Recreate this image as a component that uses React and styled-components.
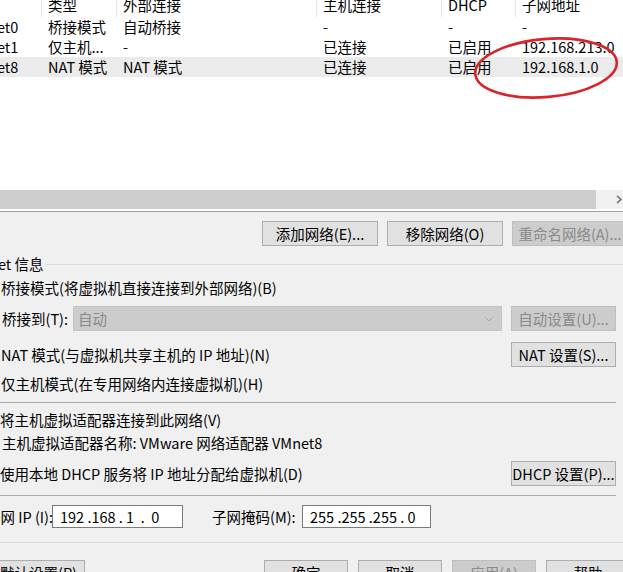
import React from "react";
import styled, { createGlobalStyle } from "styled-components";

const GlobalStyle = createGlobalStyle`
  *, *::before, *::after { box-sizing: border-box; }
  html, body { margin: 0; padding: 0; background: #f0f0f0; }
  body {
    font-family: "Noto Sans CJK SC", "Noto Sans", sans-serif;
    font-size: 14.5px;
    color: #000;
  }
`;

const Viewport = styled.div`
  position: relative;
  width: 623px;
  height: 572px;
  overflow: hidden;
  background: #f0f0f0;
`;

// the dialog is wider than the crop, its left edge sits off screen
const Dialog = styled.div`
  width: 670px;
  margin: -9px 0 0 -40px;
  display: flex;
  flex-direction: column;
`;

const NetList = styled.div`
  margin: 0 2px 0 1px;
  height: 221px;
  border: 1px solid #a0a0a0;
  background: #fff;
  padding-bottom: 2px;
  display: flex;
  flex-direction: column;
`;

const GRID = "80px 75px 200px 125px 74px 1fr";

const HeaderRow = styled.div`
  display: grid;
  grid-template-columns: ${GRID};
  height: 25px;
`;

const HeaderCell = styled.div`
  display: flex;
  align-items: center;
  padding-left: 6px;
  border-right: 1px solid #e5e5e5;
  white-space: nowrap;
  overflow: hidden;
  line-height: 20px;
`;

const ListRow = styled.div`
  display: grid;
  grid-template-columns: ${GRID};
  height: 20px;
  background: ${({ $selected }) => ($selected ? "#ebebeb" : "transparent")};
`;

const Cell = styled.div`
  display: flex;
  align-items: center;
  padding-left: 6px;
  white-space: nowrap;
  overflow: hidden;
  line-height: 20px;
`;

const ListFiller = styled.div`
  flex: 1;
`;

const HScroll = styled.div`
  height: 19px;
  display: flex;
  background: #f0f0f0;
`;

const ScrollArrow = styled.div`
  width: 17px;
  display: flex;
  align-items: center;
  justify-content: center;
`;

const ScrollTrack = styled.div`
  flex: 1;
  display: flex;
  padding-right: 14px;
`;

const ScrollThumb = styled.div`
  flex: 1;
  background: #cdcdcd;
`;

const ButtonBar = styled.div`
  display: flex;
  justify-content: flex-end;
  gap: 9px;
  margin-top: 9px;
  padding-right: 2px;
`;

const Button = styled.button`
  width: ${({ $w }) => $w}px;
  height: 25px;
  flex: none;
  padding: 0;
  font-family: inherit;
  font-size: 14.5px;
  line-height: 20px;
  white-space: nowrap;
  overflow: hidden;
  color: #000;
  background: #e1e1e1;
  border: 1px solid #adadad;
  border-radius: 0;

  &:disabled {
    color: #8a8a8a;
    background: #cccccc;
    border-color: #bfbfbf;
  }
`;

const GroupBox = styled.fieldset`
  margin: 9px 4px 0 2px;
  padding: 5px 9px 14px 9px;
  border: 1px solid #dcdcdc;
  min-width: 0;
  display: flex;
  flex-direction: column;
`;

const Legend = styled.legend`
  margin-left: -5px;
  padding: 0 2px;
  line-height: 18px;
  font-size: 14.5px;
`;

const Row = styled.div`
  display: flex;
  align-items: center;
  height: ${({ $h }) => $h || 20}px;
  margin-top: ${({ $top }) => $top || 0}px;
  line-height: 20px;
  white-space: nowrap;
`;

const Radio = styled.span`
  width: 13px;
  height: 13px;
  margin: 0 6px 0 10px;
  flex: none;
  border: 1px solid #333;
  border-radius: 50%;
  background: #fff;
  display: flex;
  align-items: center;
  justify-content: center;

  &::after {
    content: "";
    width: 7px;
    height: 7px;
    border-radius: 50%;
    background: ${({ $on }) => ($on ? "#333" : "transparent")};
  }
`;

const Check = styled.span`
  width: 13px;
  height: 13px;
  margin: 0 5px 0 10px;
  flex: none;
  border: 1px solid #333;
  background: #fff;
  font-size: 10px;
  line-height: 11px;
  text-align: center;
`;

const SubLabel = styled.span`
  padding-left: 30px;
  width: ${({ $w }) => ($w ? `${$w}px` : "auto")};
  flex: none;
`;

const Combo = styled.div`
  flex: 1;
  height: 25px;
  margin-right: 9px;
  padding: 0 7px 0 4px;
  display: flex;
  align-items: center;
  justify-content: space-between;
  background: #cccccc;
  border: 1px solid #c4c4c4;
  color: #8a8a8a;
`;

const RightButton = styled(Button)`
  margin-left: auto;
`;

const Separator = styled.div`
  height: 1px;
  margin-top: ${({ $top }) => $top}px;
  background: #a9a9a9;
`;

const FieldLabel = styled.span`
  width: ${({ $w }) => $w}px;
  margin-left: ${({ $left }) => $left || 0}px;
  padding-left: ${({ $pad }) => $pad || 0}px;
  flex: none;
  white-space: nowrap;
`;

const IpBox = styled.div`
  width: ${({ $w }) => $w}px;
  height: 23px;
  padding-left: 7px;
  display: flex;
  align-items: center;
  background: #fff;
  border: 1px solid #7a7a7a;
  white-space: pre;
`;

const Footer = styled.div`
  display: flex;
  gap: 10px;
  margin-top: 17px;
  padding-left: 3px;
`;

const FooterSpacer = styled.div`
  flex: 1;
`;

const Annotation = styled.svg`
  position: absolute;
  left: 0;
  top: 0;
  width: 623px;
  height: 572px;
  pointer-events: none;
`;

const columns = ["名称", "类型", "外部连接", "主机连接", "DHCP", "子网地址"];

const networks = [
  ["VMnet0", "桥接模式", "自动桥接", "-", "-", "-"],
  ["VMnet1", "仅主机...", "-", "已连接", "已启用", "192.168.213.0"],
  ["VMnet8", "NAT 模式", "NAT 模式", "已连接", "已启用", "192.168.1.0"],
];

const SELECTED = 2;

export default function App() {
  return (
    <Viewport>
      <GlobalStyle />
      <Dialog>
        <NetList>
          <HeaderRow>
            {columns.map((c) => (
              <HeaderCell key={c}>{c}</HeaderCell>
            ))}
          </HeaderRow>
          {networks.map((net, i) => (
            <ListRow key={net[0]} $selected={i === SELECTED}>
              {net.map((v, j) => (
                <Cell key={j}>{v}</Cell>
              ))}
            </ListRow>
          ))}
          <ListFiller />
          <HScroll>
            <ScrollArrow>
              <svg width="6" height="9" viewBox="0 0 6 9">
                <polyline points="5,1 1,4.5 5,8" fill="none" stroke="#606060" strokeWidth="1.3" />
              </svg>
            </ScrollArrow>
            <ScrollTrack>
              <ScrollThumb />
            </ScrollTrack>
            <ScrollArrow>
              <svg width="6" height="9" viewBox="0 0 6 9">
                <polyline points="1,1 5,4.5 1,8" fill="none" stroke="#606060" strokeWidth="1.3" />
              </svg>
            </ScrollArrow>
          </HScroll>
        </NetList>

        <ButtonBar>
          <Button $w={116}>添加网络(E)...</Button>
          <Button $w={116}>移除网络(O)</Button>
          <Button $w={116} disabled>重命名网络(A)...</Button>
        </ButtonBar>

        <GroupBox>
          <Legend>VMnet 信息</Legend>

          <Row>
            <Radio />
            桥接模式(将虚拟机直接连接到外部网络)(B)
          </Row>
          <Row $top={8} $h={25}>
            <SubLabel $w={101}>桥接到(T):</SubLabel>
            <Combo>
              <span>自动</span>
              <svg width="10" height="6" viewBox="0 0 10 6">
                <polyline points="1,1 5,5 9,1" fill="none" stroke="#a8a8a8" strokeWidth="1" />
              </svg>
            </Combo>
            <Button $w={105} disabled>自动设置(U)...</Button>
          </Row>
          <Row $top={11} $h={25}>
            <Radio $on />
            NAT 模式(与虚拟机共享主机的 IP 地址)(N)
            <RightButton $w={105}>NAT 设置(S)...</RightButton>
          </Row>
          <Row $top={7}>
            <Radio />
            仅主机模式(在专用网络内连接虚拟机)(H)
          </Row>

          <Separator $top={8} />

          <Row $top={7}>
            <Check>✓</Check>
            将主机虚拟适配器连接到此网络(V)
          </Row>
          <Row $top={3}>
            <SubLabel>主机虚拟适配器名称: VMware 网络适配器 VMnet8</SubLabel>
          </Row>
          <Row $top={8} $h={25}>
            <Check>✓</Check>
            使用本地 DHCP 服务将 IP 地址分配给虚拟机(D)
            <RightButton $w={105}>DHCP 设置(P)...</RightButton>
          </Row>

          <Separator $top={9} />

          <Row $top={9} $h={23}>
            <FieldLabel $w={80} $pad={14}>子网 IP (I):</FieldLabel>
            <IpBox $w={131}>{"192 .168 . 1  .  0"}</IpBox>
            <FieldLabel $w={90} $left={29}>子网掩码(M):</FieldLabel>
            <IpBox $w={129}>{"255 .255 .255 . 0"}</IpBox>
          </Row>
        </GroupBox>

        <Footer>
          <Button $w={122}>还原默认设置(R)</Button>
          <FooterSpacer />
          <Button $w={84}>确定</Button>
          <Button $w={84}>取消</Button>
          <Button $w={84} disabled>应用(A)</Button>
          <Button $w={84}>帮助</Button>
        </Footer>
      </Dialog>

      <Annotation viewBox="0 0 623 572">
        <ellipse
          cx="546"
          cy="68"
          rx="71"
          ry="29"
          transform="rotate(-5 546 68)"
          fill="none"
          stroke="#d9242b"
          strokeWidth="2.6"
        />
      </Annotation>
    </Viewport>
  );
}
